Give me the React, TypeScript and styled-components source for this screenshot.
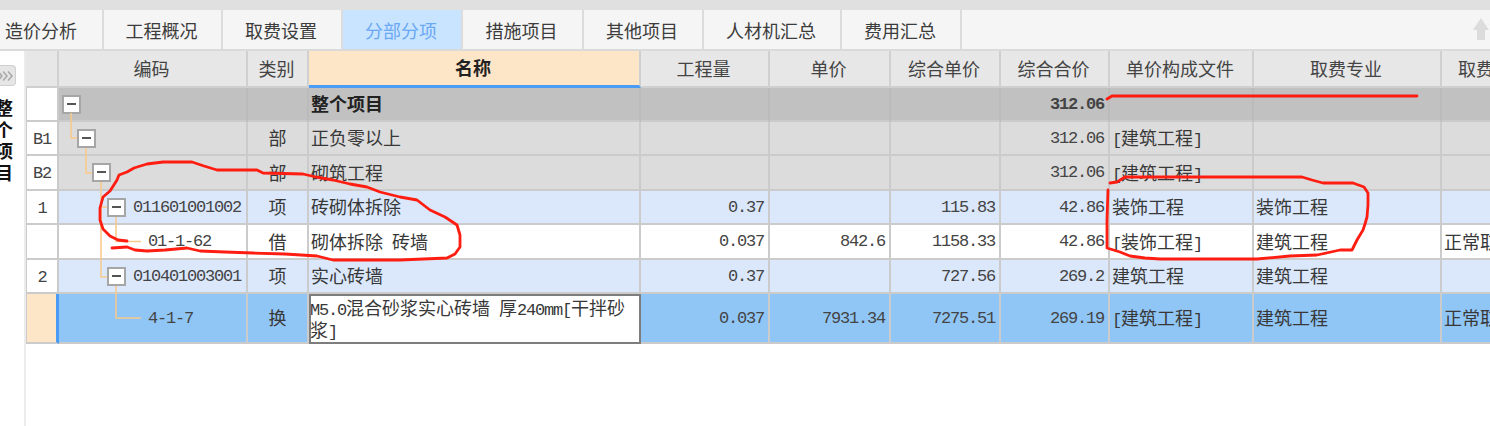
import type { ReactNode } from 'react';
import styled, { createGlobalStyle } from 'styled-components';

const GlobalStyle = createGlobalStyle`
  html, body {
    margin: 0;
    padding: 0;
    background: #fff;
    overflow: hidden;
  }
  body {
    font-family: "Noto Sans CJK SC", "Noto Sans", sans-serif;
    color: #383838;
  }
`;

type Tone = 'total' | 'section' | 'item' | 'plain' | 'active';

const toneColors: Record<Tone, string> = {
  total: '#c1c1c1',
  section: '#dcdcdc',
  item: '#dbe8fc',
  plain: '#ffffff',
  active: '#90c6f5',
};

const StyledPage = styled.div`
  position: relative;
  width: 1490px;
  height: 426px;
  overflow: hidden;
  display: flex;
  flex-direction: column;
`;

const StyledTopStrip = styled.div`
  height: 10px;
  flex: none;
  background: #e0e0e0;
`;

const StyledTabBar = styled.div`
  height: 41px;
  flex: none;
  display: flex;
  box-sizing: border-box;
  background: #f5f5f5;
  border-bottom: 2px solid #dadada;
`;

const StyledTab = styled.div<{ $width: number; $active?: boolean; $offset?: number }>`
  width: ${({ $width }) => $width}px;
  margin-left: ${({ $offset }) => $offset ?? 0}px;
  flex: none;
  display: flex;
  align-items: center;
  justify-content: center;
  box-sizing: border-box;
  padding-right: 2px;
  border-right: 2px solid #dcdcdc;
  font-size: 18px;
  color: ${({ $active }) => ($active ? '#6aa8f4' : '#3c3c3c')};
  background: ${({ $active }) => ($active ? '#c9e4ff' : 'transparent')};
`;

const StyledUpArrow = styled.svg`
  margin: 8px 1px 0 auto;
  width: 16px;
  height: 22px;
  flex: none;
`;

const StyledBody = styled.div`
  flex: 1;
  display: flex;
  min-height: 0;
`;

const StyledSidebar = styled.div`
  width: 26px;
  flex: none;
  box-sizing: border-box;
  border-right: 2px solid #ececec;
  overflow: hidden;
  padding-top: 14px;
`;

const StyledExpand = styled.div`
  width: 16px;
  height: 21px;
  box-sizing: border-box;
  display: flex;
  align-items: center;
  background: #e6e6e6;
  border: 1px solid #cfcfcf;
  border-left: none;
  border-radius: 0 4px 4px 0;
  overflow: hidden;
`;

const StyledSideTitle = styled.div`
  width: 18px;
  margin: 11px 0 0 -5px;
  font-size: 18px;
  font-weight: 700;
  line-height: 21.5px;
  color: #111;
  word-break: break-all;
`;

const StyledGrid = styled.div`
  flex: none;
  display: grid;
  grid-template-columns: 33px 189px 61px 332px 129px 121px 110px 109px 144px 188px 108px;
  grid-template-rows: 37px 34px 34px 35px 34px 35px 34px 50px;
  align-self: flex-start;
`;

const StyledHeaderCell = styled.div<{ $focus?: boolean }>`
  box-sizing: border-box;
  display: flex;
  align-items: center;
  justify-content: center;
  padding: 0 2px 2px 0;
  font-size: 18px;
  font-weight: ${({ $focus }) => ($focus ? 700 : 400)};
  color: ${({ $focus }) => ($focus ? '#222' : '#444')};
  background: ${({ $focus }) => ($focus ? '#fde5c8' : '#e7e7e7')};
  border-right: 2px solid #d0d0d0;
  border-bottom: ${({ $focus }) => ($focus ? '3px solid #4a9cf5' : '2px solid #cfcfcf')};
`;

const StyledRow = styled.div`
  display: contents;
`;

const StyledRowHead = styled.div<{ $active?: boolean }>`
  box-sizing: border-box;
  display: flex;
  align-items: center;
  justify-content: center;
  background: ${({ $active }) => ($active ? '#fde5c8' : '#fff')};
  border-right: ${({ $active }) => ($active ? '3px solid #4a9cf5' : '2px solid #cbcbcb')};
  border-bottom: 2px solid #cbcbcb;
  border-left: 1px solid #cbcbcb;
`;

const StyledCell = styled.div<{ $tone: Tone; $align?: 'left' | 'center' | 'right'; $bold?: boolean }>`
  box-sizing: border-box;
  min-width: 0;
  display: flex;
  align-items: center;
  justify-content: ${({ $align }) =>
    $align === 'right' ? 'flex-end' : $align === 'center' ? 'center' : 'flex-start'};
  padding: 0 ${({ $align }) => ($align === 'right' ? 4 : 2)}px 2px 2px;
  font-size: 18px;
  font-weight: ${({ $bold }) => ($bold ? 700 : 400)};
  white-space: nowrap;
  color: ${({ $bold }) => ($bold ? '#222' : '#383838')};
  background: ${({ $tone }) => toneColors[$tone]};
  border-right: 2px solid ${({ $tone }) => ($tone === 'total' ? '#bbbbbb' : '#cbcbcb')};
  border-bottom: 2px solid #cbcbcb;
`;

const StyledCodeCell = styled(StyledCell)<{ $indent: number }>`
  padding-left: ${({ $indent }) => $indent}px;
  gap: 7px;
`;

const StyledEditCell = styled.div`
  box-sizing: border-box;
  min-width: 0;
  background: #fff;
  border: 2px solid #7d7d7d;
  font-size: 18px;
  line-height: 21px;
  color: #383838;
  overflow: hidden;
  display: flex;
  align-items: center;
`;

const StyledEditText = styled.div`
  word-break: break-all;
  margin-left: -1px;
`;

const StyledMono = styled.span`
  font-family: "Liberation Mono", monospace;
  font-size: 17px;
  line-height: 1;
  letter-spacing: -1.2px;
`;

const StyledValue = styled(StyledMono)<{ $bold?: boolean }>`
  display: inline-block;
  padding-top: 2px;
  font-weight: ${({ $bold }) => ($bold ? 700 : 400)};
  color: #444;
`;

const StyledToggle = styled.span`
  position: relative;
  width: 19px;
  height: 19px;
  flex: none;
  box-sizing: border-box;
  background: #fff;
  border: 2px solid #a6a6a6;
  margin-top: 2px;
  &::after {
    content: '';
    position: absolute;
    left: 3px;
    right: 3px;
    top: 6px;
    height: 2px;
    background: #555;
  }
`;

const StyledOverlay = styled.svg`
  position: absolute;
  left: 0;
  top: 0;
  pointer-events: none;
`;

const Bracketed = ({ children }: { children: ReactNode }) => (
  <span>
    <StyledMono>[</StyledMono>
    {children}
    <StyledMono>]</StyledMono>
  </span>
);

interface TableRow {
  readonly head?: string;
  readonly tone: Tone;
  readonly indent: number;
  readonly toggle?: boolean;
  readonly code?: string;
  readonly kind?: string;
  readonly name?: ReactNode;
  readonly qty?: string;
  readonly price?: string;
  readonly unit?: string;
  readonly total?: string;
  readonly file?: ReactNode;
  readonly major?: string;
  readonly mode?: string;
  readonly bold?: boolean;
}

const tabs = [
  { label: '造价分析', width: 122, offset: -18 },
  { label: '工程概况', width: 119 },
  { label: '取费设置', width: 120 },
  { label: '分部分项', width: 120, active: true },
  { label: '措施项目', width: 121 },
  { label: '其他项目', width: 120 },
  { label: '人材机汇总', width: 138 },
  { label: '费用汇总', width: 120 },
];

const columns = ['编码', '类别', '名称', '工程量', '单价', '综合单价', '综合合价', '单价构成文件', '取费专业', '取费方式'];

const rows: TableRow[] = [
  { tone: 'total', indent: 3, toggle: true, name: '整个项目', total: '312.06', bold: true },
  { head: 'B1', tone: 'section', indent: 18, toggle: true, kind: '部', name: '正负零以上', total: '312.06', file: <Bracketed>建筑工程</Bracketed> },
  { head: 'B2', tone: 'section', indent: 33, toggle: true, kind: '部', name: '砌筑工程', total: '312.06', file: <Bracketed>建筑工程</Bracketed> },
  {
    head: '1', tone: 'item', indent: 48, toggle: true, code: '011601001002', kind: '项', name: '砖砌体拆除',
    qty: '0.37', unit: '115.83', total: '42.86', file: '装饰工程', major: '装饰工程',
  },
  {
    tone: 'plain', indent: 89, code: '01-1-62', kind: '借', name: <span>砌体拆除<StyledMono> </StyledMono>砖墙</span>,
    qty: '0.037', price: '842.6', unit: '1158.33', total: '42.86', file: <Bracketed>装饰工程</Bracketed>, major: '建筑工程', mode: '正常取费',
  },
  {
    head: '2', tone: 'item', indent: 48, toggle: true, code: '010401003001', kind: '项', name: '实心砖墙',
    qty: '0.37', unit: '727.56', total: '269.2', file: '建筑工程', major: '建筑工程',
  },
  {
    tone: 'active', indent: 89, code: '4-1-7', kind: '换',
    qty: '0.037', price: '7931.34', unit: '7275.51', total: '269.19', file: <Bracketed>建筑工程</Bracketed>, major: '建筑工程', mode: '正常取费',
  },
];

const treeLines = [
  'M71 113V138H77',
  'M86 148V173H92',
  'M101 182V277H107',
  'M101 207H107',
  'M116 217V241.5H141',
  'M116 286V318H141',
];

const scribbles = [
  'M127 241L118 240L110 236L103 229L100 220L100 208L103 197L110 191L117 180L119 175L127 172L134 168L147 164L163 162L192 162L204 166L217 170L257 170L263 173L303 174L316 177L333 180L350 184L367 187L380 192L400 197L417 200L430 210L445 217L457 225L460 235L460 247L455 254L447 258L400 260L333 260L317 256L285 254L253 253L225 252L200 251L187 248L165 250L147 251L135 250L127 247L112 248',
  'M1110 183L1117 182L1125 177L1302 177L1312 180L1323 183L1353 183L1364 187L1368 193L1368 205L1367 217L1365 224L1363 230L1357 240L1352 250L1340 250L1317 255L1290 256L1257 259L1160 259L1145 258L1130 256L1120 252L1107 248L1107 220L1108 190',
  'M1107 99L1112 96L1417 96',
];

const DataRow = ({ row }: { row: TableRow }) => {
  const { tone, bold } = row;
  return (
    <StyledRow>
      <StyledRowHead $active={tone === 'active'}>
        <StyledValue>{row.head}</StyledValue>
      </StyledRowHead>
      <StyledCodeCell $tone={tone} $indent={row.indent}>
        {row.toggle && <StyledToggle />}
        {row.code && <StyledValue>{row.code}</StyledValue>}
      </StyledCodeCell>
      <StyledCell $tone={tone} $align="center">{row.kind}</StyledCell>
      {tone === 'active' ? (
        <StyledEditCell>
          <StyledEditText>
            <StyledMono>M5.0</StyledMono>混合砂浆实心砖墙<StyledMono> </StyledMono>厚<StyledMono>240mm[</StyledMono>干拌砂浆<StyledMono>]</StyledMono>
          </StyledEditText>
        </StyledEditCell>
      ) : (
        <StyledCell $tone={tone} $bold={bold}>{row.name}</StyledCell>
      )}
      <StyledCell $tone={tone} $align="right"><StyledValue>{row.qty}</StyledValue></StyledCell>
      <StyledCell $tone={tone} $align="right"><StyledValue>{row.price}</StyledValue></StyledCell>
      <StyledCell $tone={tone} $align="right"><StyledValue>{row.unit}</StyledValue></StyledCell>
      <StyledCell $tone={tone} $align="right"><StyledValue $bold={bold}>{row.total}</StyledValue></StyledCell>
      <StyledCell $tone={tone}>{row.file}</StyledCell>
      <StyledCell $tone={tone}>{row.major}</StyledCell>
      <StyledCell $tone={tone}>{row.mode}</StyledCell>
    </StyledRow>
  );
};

export default function App() {
  return (
    <StyledPage>
      <GlobalStyle />
      <StyledTopStrip />
      <StyledTabBar>
        {tabs.map((tab) => (
          <StyledTab key={tab.label} $width={tab.width} $active={tab.active} $offset={tab.offset}>
            {tab.label}
          </StyledTab>
        ))}
        <StyledUpArrow viewBox="0 0 16 22">
          <path d="M8 0L16 12H12V22H4V12H0Z" fill="#dcdcdc" />
        </StyledUpArrow>
      </StyledTabBar>
      <StyledBody>
        <StyledSidebar>
          <StyledExpand>
            <svg width="15" height="12" viewBox="0 0 15 12" fill="none" stroke="#a8a8a8" strokeWidth="1.5">
              <path d="M-2 1.5L2 6L-2 10.5M3 1.5L7 6L3 10.5M8 1.5L12 6L8 10.5" />
            </svg>
          </StyledExpand>
          <StyledSideTitle>整个项目</StyledSideTitle>
        </StyledSidebar>
        <StyledGrid>
          <StyledHeaderCell />
          {columns.map((column) => (
            <StyledHeaderCell key={column} $focus={column === '名称'}>{column}</StyledHeaderCell>
          ))}
          {rows.map((row, index) => (
            <DataRow key={index} row={row} />
          ))}
        </StyledGrid>
      </StyledBody>
      <StyledOverlay width="1490" height="426" viewBox="0 0 1490 426" fill="none">
        {treeLines.map((d) => (
          <path key={d} d={d} stroke="#f9c98a" strokeWidth="1.5" />
        ))}
        {scribbles.map((d) => (
          <path key={d} d={d} stroke="#ff1c10" strokeWidth="2.8" strokeLinejoin="round" strokeLinecap="round" />
        ))}
      </StyledOverlay>
    </StyledPage>
  );
}
